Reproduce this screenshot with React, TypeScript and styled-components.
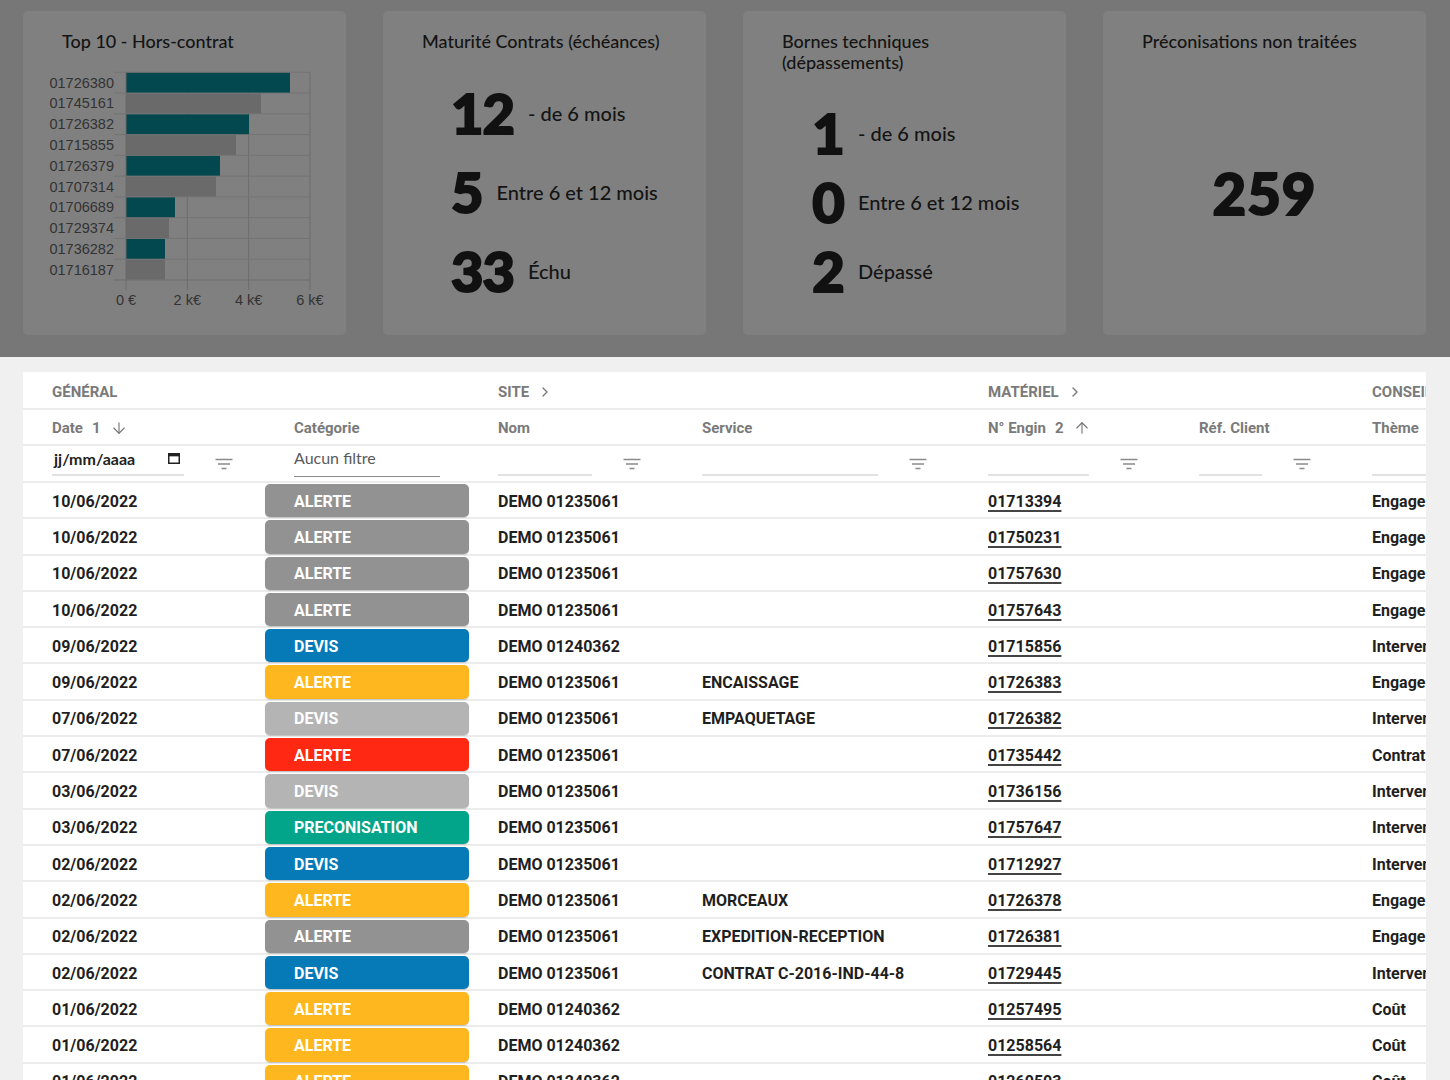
import React from "react";
import styled, { createGlobalStyle } from "styled-components";
import { ArrowDown, ArrowUp, ChevronRight } from "lucide-react";

const GlobalStyle = createGlobalStyle`
  body {
    margin: 0;
    background: #f0f0f0;
    font-family: Roboto, "Liberation Sans", sans-serif;
  }
`;

type Bar = { id: string; w: number; hl: boolean };

const bars: Bar[] = [
  { id: "01726380", w: 164, hl: true },
  { id: "01745161", w: 135, hl: false },
  { id: "01726382", w: 123, hl: true },
  { id: "01715855", w: 110, hl: false },
  { id: "01726379", w: 94, hl: true },
  { id: "01707314", w: 90, hl: false },
  { id: "01706689", w: 49, hl: true },
  { id: "01729374", w: 43, hl: false },
  { id: "01736282", w: 39, hl: true },
  { id: "01716187", w: 39, hl: false },
];

type Kind = "grey" | "blue" | "yellow" | "light" | "red" | "teal";

const badgeColors: Record<Kind, string> = {
  grey: "#929292",
  blue: "#0679b7",
  yellow: "#feb71f",
  light: "#b4b4b4",
  red: "#ff2812",
  teal: "#02a58a",
};

type Line = {
  date: string;
  cat: string;
  kind: Kind;
  site: string;
  service: string;
  engin: string;
  theme: string;
};

const rows: Line[] = [
  { date: "10/06/2022", cat: "ALERTE", kind: "grey", site: "DEMO 01235061", service: "", engin: "01713394", theme: "Engagement" },
  { date: "10/06/2022", cat: "ALERTE", kind: "grey", site: "DEMO 01235061", service: "", engin: "01750231", theme: "Engagement" },
  { date: "10/06/2022", cat: "ALERTE", kind: "grey", site: "DEMO 01235061", service: "", engin: "01757630", theme: "Engagement" },
  { date: "10/06/2022", cat: "ALERTE", kind: "grey", site: "DEMO 01235061", service: "", engin: "01757643", theme: "Engagement" },
  { date: "09/06/2022", cat: "DEVIS", kind: "blue", site: "DEMO 01240362", service: "", engin: "01715856", theme: "Intervention" },
  { date: "09/06/2022", cat: "ALERTE", kind: "yellow", site: "DEMO 01235061", service: "ENCAISSAGE", engin: "01726383", theme: "Engagement" },
  { date: "07/06/2022", cat: "DEVIS", kind: "light", site: "DEMO 01235061", service: "EMPAQUETAGE", engin: "01726382", theme: "Intervention" },
  { date: "07/06/2022", cat: "ALERTE", kind: "red", site: "DEMO 01235061", service: "", engin: "01735442", theme: "Contrat" },
  { date: "03/06/2022", cat: "DEVIS", kind: "light", site: "DEMO 01235061", service: "", engin: "01736156", theme: "Intervention" },
  { date: "03/06/2022", cat: "PRECONISATION", kind: "teal", site: "DEMO 01235061", service: "", engin: "01757647", theme: "Intervention" },
  { date: "02/06/2022", cat: "DEVIS", kind: "blue", site: "DEMO 01235061", service: "", engin: "01712927", theme: "Intervention" },
  { date: "02/06/2022", cat: "ALERTE", kind: "yellow", site: "DEMO 01235061", service: "MORCEAUX", engin: "01726378", theme: "Engagement" },
  { date: "02/06/2022", cat: "ALERTE", kind: "grey", site: "DEMO 01235061", service: "EXPEDITION-RECEPTION", engin: "01726381", theme: "Engagement" },
  { date: "02/06/2022", cat: "DEVIS", kind: "blue", site: "DEMO 01235061", service: "CONTRAT C-2016-IND-44-8", engin: "01729445", theme: "Intervention" },
  { date: "01/06/2022", cat: "ALERTE", kind: "yellow", site: "DEMO 01240362", service: "", engin: "01257495", theme: "Coût" },
  { date: "01/06/2022", cat: "ALERTE", kind: "yellow", site: "DEMO 01240362", service: "", engin: "01258564", theme: "Coût" },
  { date: "01/06/2022", cat: "ALERTE", kind: "yellow", site: "DEMO 01240362", service: "", engin: "01260503", theme: "Coût" },
];

function HorsContratChart() {
  const x0 = 86;
  const step = 20.77;
  const top = 8.3;
  const ticks = [0, 1, 2, 3].map((i) => x0 + i * 61.33);
  const tickLabels = ["0 €", "2 k€", "4 k€", "6 k€"];
  const bottom = top + step * bars.length;
  return (
    <ChartSvg width="290" height="250" viewBox="0 0 290 250">
      {ticks.slice(1).map((x) => (
        <line key={x} x1={x} y1={top} x2={x} y2={bottom + 10} stroke="#6c6c6c" strokeWidth="1" />
      ))}
      {bars.map((b, i) => (
        <line key={b.id} x1={74} y1={top + i * step} x2={270} y2={top + i * step} stroke="#737373" strokeWidth="1" />
      ))}
      <line x1={74} y1={bottom} x2={270} y2={bottom} stroke="#6c6c6c" strokeWidth="1" />
      {bars.map((b, i) => (
        <rect
          key={b.id + "r"}
          x={x0}
          y={top + i * step + 0.5}
          width={b.w}
          height={step - 1}
          fill={b.hl ? "#03474f" : "#6a6a6a"}
        />
      ))}
      <line x1={x0} y1={top} x2={x0} y2={bottom + 10} stroke="#6a6a6a" strokeWidth="1" />
      {bars.map((b, i) => (
        <text
          key={b.id + "t"}
          x={74}
          y={top + i * step + step / 2 + 5}
          textAnchor="end"
          fontSize="14.5"
          fill="#333"
          fontFamily="'Liberation Sans', Arial, sans-serif"
        >
          {b.id}
        </text>
      ))}
      {ticks.map((x, i) => (
        <text
          key={"a" + i}
          x={x}
          y={241}
          textAnchor="middle"
          fontSize="14.5"
          fill="#333"
          fontFamily="'Liberation Sans', Arial, sans-serif"
        >
          {tickLabels[i]}
        </text>
      ))}
    </ChartSvg>
  );
}

function FilterIcon() {
  return (
    <FilterSvg width="18" height="12" viewBox="0 0 18 12">
      <path d="M0.5 1.5h17M3 6h12M6.5 10.5h5" stroke="#8a8a8a" strokeWidth="1.4" fill="none" />
    </FilterSvg>
  );
}

function CalendarIcon() {
  return (
    <svg width="12" height="11" viewBox="0 0 12 11">
      <rect x="0.75" y="0.75" width="10.5" height="9.5" stroke="#222" strokeWidth="1.5" fill="none" />
      <rect x="0.75" y="0.75" width="10.5" height="2.6" fill="#222" />
    </svg>
  );
}

export default function App() {
  return (
    <>
      <GlobalStyle />
      <Dashboard>
        <Card>
          <CardTitle>Top 10 - Hors-contrat</CardTitle>
          <HorsContratChart />
        </Card>
        <Card>
          <CardTitle>Maturité Contrats (échéances)</CardTitle>
          <StatList $top={21}>
            <StatRow $h={79}>
              <BigNum>12</BigNum>
              <StatLabel>- de 6 mois</StatLabel>
            </StatRow>
            <StatRow $h={79}>
              <BigNum>5</BigNum>
              <StatLabel>Entre 6 et 12 mois</StatLabel>
            </StatRow>
            <StatRow $h={79}>
              <BigNum>33</BigNum>
              <StatLabel>Échu</StatLabel>
            </StatRow>
          </StatList>
        </Card>
        <Card>
          <CardTitle>
            Bornes techniques
            <br />
            (dépassements)
          </CardTitle>
          <StatList $top={25}>
            <StatRow $h={69}>
              <BigNum $col>1</BigNum>
              <StatLabel>- de 6 mois</StatLabel>
            </StatRow>
            <StatRow $h={69}>
              <BigNum $col>0</BigNum>
              <StatLabel>Entre 6 et 12 mois</StatLabel>
            </StatRow>
            <StatRow $h={69}>
              <BigNum $col>2</BigNum>
              <StatLabel>Dépassé</StatLabel>
            </StatRow>
          </StatList>
        </Card>
        <Card>
          <CardTitle>Préconisations non traitées</CardTitle>
          <CenterArea>
            <BigNum $wide>259</BigNum>
          </CenterArea>
        </Card>
      </Dashboard>

      <TableWrap>
        <GroupRow>
          <GroupCell $span={2}>GÉNÉRAL</GroupCell>
          <GroupCell $span={2}>
            SITE <ChevronRight size={16} strokeWidth={2} color="#7a7a7a" />
          </GroupCell>
          <GroupCell $span={2}>
            MATÉRIEL <ChevronRight size={16} strokeWidth={2} color="#7a7a7a" />
          </GroupCell>
          <GroupCell $span={1}>CONSEIL</GroupCell>
        </GroupRow>

        <HeaderRow>
          <HeadCell>
            Date <span>1</span> <ArrowDown size={18} strokeWidth={1.5} color="#777" />
          </HeadCell>
          <HeadCell>Catégorie</HeadCell>
          <HeadCell>Nom</HeadCell>
          <HeadCell>Service</HeadCell>
          <HeadCell>
            N° Engin <span>2</span> <ArrowUp size={18} strokeWidth={1.5} color="#777" />
          </HeadCell>
          <HeadCell>Réf. Client</HeadCell>
          <HeadCell>Thème</HeadCell>
        </HeaderRow>

        <FilterRow>
          <FilterCell>
            <DateInput>
              <span>jj/mm/aaaa</span>
              <CalendarIcon />
            </DateInput>
            <FilterIcon />
          </FilterCell>
          <FilterCell>
            <SelectBox>Aucun filtre</SelectBox>
          </FilterCell>
          <FilterCell>
            <TextInput />
            <FilterIcon />
          </FilterCell>
          <FilterCell>
            <TextInput />
            <FilterIcon />
          </FilterCell>
          <FilterCell>
            <TextInput />
            <FilterIcon />
          </FilterCell>
          <FilterCell>
            <TextInput />
            <FilterIcon />
          </FilterCell>
          <FilterCell>
            <TextInput />
            <FilterIcon />
          </FilterCell>
        </FilterRow>

        {rows.map((r, i) => (
          <DataRow key={i}>
            <Cell>{r.date}</Cell>
            <Badge $bg={badgeColors[r.kind]}>{r.cat}</Badge>
            <Cell>{r.site}</Cell>
            <Cell>{r.service}</Cell>
            <Cell>
              <EnginLink>{r.engin}</EnginLink>
            </Cell>
            <Cell />
            <Cell>{r.theme}</Cell>
          </DataRow>
        ))}
      </TableWrap>
    </>
  );
}

const COLS = "242px 204px 204px 286px 211px 173px 220px";

const Dashboard = styled.div`
  background: #777777;
  height: 357px;
  box-sizing: border-box;
  padding: 11px 24px 22px 23px;
  display: grid;
  grid-template-columns: repeat(4, minmax(0, 1fr));
  gap: 37px;
`;

const Card = styled.div`
  background: #808080;
  border-radius: 5px;
  padding: 20px 20px 0 39px;
  display: flex;
  flex-direction: column;
  min-width: 0;
  font-family: Lato, "Noto Sans", sans-serif;
  color: #141414;
`;

const CardTitle = styled.h2`
  margin: 0;
  font-size: 18px;
  font-weight: 500;
  line-height: 21px;
  white-space: nowrap;
`;

const ChartSvg = styled.svg`
  display: block;
  flex: none;
  margin: 12px 0 0 -22px;
`;

const StatList = styled.div<{ $top: number }>`
  display: flex;
  flex-direction: column;
  margin: ${(p) => p.$top}px 0 0 29px;
`;

const StatRow = styled.div<{ $h: number }>`
  display: flex;
  align-items: center;
  gap: 14px;
  height: ${(p) => p.$h}px;
`;

const BigNum = styled.span<{ $col?: boolean; $wide?: boolean }>`
  font-family: Lato, "Noto Sans", sans-serif;
  font-size: ${(p) => (p.$wide ? "58px" : "56px")};
  font-weight: 900;
  line-height: 1;
  letter-spacing: ${(p) => (p.$wide ? "1px" : "-1px")};
  color: #111;
  -webkit-text-stroke: 2px #111;
  width: ${(p) => (p.$col ? "34px" : "auto")};
  text-align: center;
  margin-right: ${(p) => (p.$col ? "-1px" : "0")};
`;

const StatLabel = styled.span`
  font-size: 20px;
  font-weight: 500;
  color: #141414;
`;

const CenterArea = styled.div`
  flex: 1;
  display: flex;
  align-items: center;
  justify-content: center;
  margin-left: -19px;
  padding-bottom: 2px;
`;

const TableWrap = styled.div`
  margin: 15px 24px 0 23px;
  background: #fff;
  overflow: hidden;
`;

const Row = styled.div`
  display: grid;
  grid-template-columns: ${COLS};
  width: max-content;
  box-sizing: border-box;
  border-bottom: 2px solid #ececec;
`;

const GroupRow = styled(Row)`
  height: 38px;
  padding-top: 3px;
`;

const GroupCell = styled.div<{ $span: number }>`
  grid-column: span ${(p) => p.$span};
  display: flex;
  align-items: center;
  gap: 8px;
  padding-left: 29px;
  font-size: 15px;
  font-weight: 700;
  color: #7a7a7a;
`;

const HeaderRow = styled(Row)`
  height: 36px;
  padding-top: 2px;
`;

const HeadCell = styled.div`
  display: flex;
  align-items: center;
  gap: 9px;
  padding-left: 29px;
  font-size: 15px;
  font-weight: 700;
  color: #7a7a7a;
  white-space: nowrap;
`;

const FilterRow = styled(Row)`
  height: 37px;
`;

const FilterCell = styled.div`
  display: flex;
  align-items: center;
  padding: 0 32px 0 29px;
  min-width: 0;
`;

const DateInput = styled.div`
  flex: 1;
  align-self: flex-start;
  margin-top: 2px;
  height: 28px;
  box-sizing: border-box;
  padding: 0 4px 5px 2px;
  border-bottom: 2px solid #e2e2e2;
  display: flex;
  align-items: center;
  justify-content: space-between;
  font-family: Lato, "Noto Sans", sans-serif;
  font-size: 16px;
  font-weight: 700;
  color: #222;
`;

const TextInput = styled.div`
  flex: 1;
  align-self: flex-start;
  margin-top: 2px;
  height: 28px;
  box-sizing: border-box;
  border-bottom: 2px solid #e2e2e2;
`;

const SelectBox = styled.div`
  flex: 1;
  align-self: flex-start;
  margin: 2px -3px 0 0;
  height: 29px;
  box-sizing: border-box;
  padding-bottom: 9px;
  border-bottom: 1px solid #8a8a8a;
  display: flex;
  align-items: center;
  font-family: Lato, "Noto Sans", sans-serif;
  font-size: 16px;
  color: #5a5a5a;
`;

const FilterSvg = styled.svg`
  flex: none;
  margin-left: 31px;
`;

const DataRow = styled(Row)`
  height: 36.3px;
`;

const Cell = styled.div`
  display: flex;
  align-items: center;
  padding: 2px 0 0 29px;
  font-size: 16px;
  font-weight: 700;
  color: #1f1f1f;
  white-space: nowrap;
  overflow: hidden;
`;

const Badge = styled.div<{ $bg: string }>`
  display: flex;
  align-items: center;
  margin-top: 1px;
  padding: 1px 0 0 29px;
  background: ${(p) => p.$bg};
  border-radius: 5px;
  box-shadow: 0 1px 1px rgba(0, 0, 0, 0.18);
  color: #fff;
  font-size: 16px;
  font-weight: 700;
`;

const EnginLink = styled.span`
  text-decoration: underline;
  text-decoration-thickness: 2px;
  text-underline-offset: 3px;
  text-decoration-color: #444;
`;
